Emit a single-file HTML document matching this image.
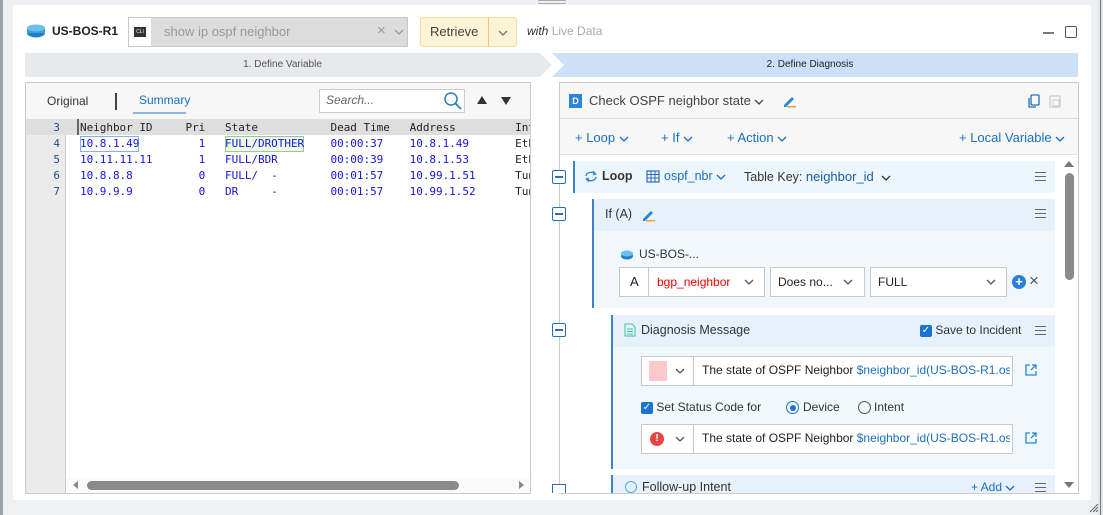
<!DOCTYPE html>
<html><head><meta charset="utf-8"><style>
*{box-sizing:border-box;margin:0;padding:0}
body{width:1103px;height:515px;background:#eef0f4;font-family:"Liberation Sans",sans-serif;font-size:12px;color:#222;position:relative;overflow:hidden}
.a{position:absolute}
.mono{font-family:"DejaVu Sans Mono","Liberation Mono",monospace;font-size:11px}
.blue{color:#1a6fc0}
.ck{display:inline-block;width:12px;height:12px;background:#1a73d1;border-radius:2px;color:#fff;font-size:10px;line-height:12px;text-align:center;vertical-align:middle}
.mn{position:absolute;width:14px;height:14px;border:1.5px solid #2a6fb5;background:#fff;border-radius:2px}
.mn:after{content:"";position:absolute;left:2px;right:2px;top:5px;height:1.5px;background:#2a6fb5}
.hb{position:absolute;width:11px;height:9px;border-top:1.5px solid #666;border-bottom:1.5px solid #666}
.hb:after{content:"";position:absolute;left:0;right:0;top:2.5px;height:1.5px;background:#666}
.box{position:absolute;background:#fff;border:1px solid #ccc}
.cv{display:inline-block;width:10px;height:6px;vertical-align:middle}
</style></head><body>
<svg width="0" height="0" style="position:absolute"><defs><symbol id="c" viewBox="0 0 10 6"><path d="M1 1L5 5L9 1" fill="none" stroke="currentColor" stroke-width="1.3"/></symbol></defs></svg>
<div class="a" style="left:0;top:0;width:3px;height:515px;background:#9aa3ad"></div>
<div class="a" style="left:1098px;top:0;width:5px;height:515px;background:#e4e6ea"></div>
<div class="a" style="left:1100px;top:0;width:1px;height:515px;background:#777"></div>
<div class="a" style="left:538px;top:0;width:28px;height:4px;border-top:1px solid #aaa;border-bottom:1px solid #aaa"></div>
<div class="a" style="left:13px;top:5px;width:1078px;height:495px;background:#fff"></div>

<!-- header -->
<svg class="a" style="left:26px;top:24px" width="20" height="14"><ellipse cx="10" cy="9" rx="9" ry="4.5" fill="#1f7fc4"/><rect x="1" y="4" width="18" height="5" fill="#3aa0e0"/><ellipse cx="10" cy="4" rx="9" ry="3.5" fill="#6cc0f0"/></svg>
<div class="a" style="left:52px;top:24px;font-size:12px;font-weight:bold;color:#222">US-BOS-R1</div>
<div class="a" style="left:128px;top:17px;width:280px;height:30px;background:#dcdcdc;border:1px solid #c8c8c8"></div>
<div class="a" style="left:129px;top:18px;width:22px;height:28px;background:#fff"></div>
<div class="a" style="left:134px;top:27px;width:12px;height:10px;background:#333;color:#fff;font-size:5px;line-height:10px;text-align:center">CLI</div>
<div class="a" style="left:164px;top:24px;font-size:13px;color:#999">show ip ospf neighbor</div>
<div class="a" style="left:377px;top:22px;font-size:15px;color:#999">×</div>
<svg class="a cv" style="left:394px;top:29px;color:#999"><use href="#c"/></svg>
<div class="a" style="left:420px;top:17px;width:97px;height:30px;background:#fdf3d6;border:1px solid #f3dfa6;border-radius:3px"></div>
<div class="a" style="left:488px;top:17px;width:1px;height:30px;background:#f0c870"></div>
<div class="a" style="left:430px;top:24px;font-size:13px;color:#444">Retrieve</div>
<svg class="a cv" style="left:498px;top:30px;color:#777"><use href="#c"/></svg>
<div class="a" style="left:527px;top:24px;font-size:12px;"><i style="color:#333">with</i> <span style="color:#aaa">Live Data</span></div>
<div class="a" style="left:1043px;top:32px;width:11px;height:1.5px;background:#777"></div>
<div class="a" style="left:1065px;top:26px;width:12px;height:12px;border:1.5px solid #555;border-radius:2px"></div>

<!-- steps -->
<svg class="a" style="left:25px;top:53px" width="1054" height="24"><polygon points="0,0 515,0 527,12 515,24 0,24" fill="#e8e9eb"/><polygon points="527,0 1053,0 1053,24 527,24 539,12" fill="#cce1f7"/><polygon points="515,0 527,12 515,24 520,24 532,12 520,0" fill="#fff"/></svg>
<div class="a" style="left:25px;top:59px;width:515px;text-align:center;font-size:10px;color:#555">1. Define Variable</div>
<div class="a" style="left:545px;top:59px;width:530px;text-align:center;font-size:10px;color:#222">2. Define Diagnosis</div>

<!-- left panel -->
<div class="box" style="left:25px;top:82px;width:506px;height:412px"></div>
<div class="a" style="left:26px;top:83px;width:504px;height:36px;background:#f7f7f7"></div>
<div class="a" style="left:47px;top:94px;font-size:12px;color:#333">Original</div>
<div class="a" style="left:115px;top:93px;width:1.5px;height:17px;background:#444"></div>
<div class="a" style="left:139px;top:93px;font-size:12px;color:#1a6fc0">Summary</div>
<div class="a" style="left:133px;top:112px;width:53px;height:2px;background:#8ab8e0"></div>
<div class="a" style="left:319px;top:89px;width:146px;height:24px;background:#fff;border:1px solid #ccc"></div>
<div class="a" style="left:326px;top:93px;font-size:12px;font-style:italic;color:#666">Search...</div>
<svg class="a" style="left:443px;top:91px" width="20" height="20"><circle cx="8" cy="8" r="6" fill="none" stroke="#2a7fc0" stroke-width="1.5"/><line x1="12.5" y1="12.5" x2="18" y2="18" stroke="#2a7fc0" stroke-width="1.8"/></svg>
<div class="a" style="left:477px;top:96px;width:0;height:0;border-left:5px solid transparent;border-right:5px solid transparent;border-bottom:8px solid #333"></div>
<div class="a" style="left:501px;top:97px;width:0;height:0;border-left:5px solid transparent;border-right:5px solid transparent;border-top:8px solid #333"></div>
<div class="a" style="left:26px;top:119px;width:40px;height:374px;background:#ebebeb;border-right:1px solid #ccc"></div>
<div class="a" style="left:26px;top:119px;width:504px;height:16px;background:#dedede"></div>
<div class="a" style="left:77px;top:119px;width:2px;height:16px;background:#666"></div>
<div class="a mono" style="left:26px;top:120px;width:34px;text-align:right;line-height:16px;color:#1a4f8a">3<br>4<br>5<br>6<br>7</div>
<div class="a" style="left:80px;top:136px;width:59px;height:16px;border:1px solid #7fb6e6"></div>
<div class="a" style="left:225px;top:136px;width:79px;height:16px;border:1px solid #8fd08f;background:#eef9e8"></div>
<pre class="a mono" style="left:80px;top:120px;line-height:16px;color:#1515e0;width:450px;overflow:hidden;letter-spacing:-0.03px"><span style="color:#222">Neighbor ID     Pri   State           Dead Time   Address         Int</span>
10.8.1.49         1   FULL/DROTHER    00:00:37    10.8.1.49       <span style="color:#222">Eth</span>
10.11.11.11       1   FULL/BDR        00:00:39    10.8.1.53       <span style="color:#222">Eth</span>
10.8.8.8          0   FULL/  -        00:01:57    10.99.1.51      <span style="color:#222">Tun</span>
10.9.9.9          0   DR     -        00:01:57    10.99.1.52      <span style="color:#222">Tun</span></pre>
<div class="a" style="left:67px;top:478px;width:462px;height:15px;background:#fafafa"></div>
<div class="a" style="left:73px;top:481px;width:0;height:0;border-top:4px solid transparent;border-bottom:4px solid transparent;border-right:5px solid #888"></div>
<div class="a" style="left:87px;top:481px;width:372px;height:9px;background:#8a8a8a;border-radius:5px"></div>
<div class="a" style="left:519px;top:481px;width:0;height:0;border-top:4px solid transparent;border-bottom:4px solid transparent;border-left:5px solid #888"></div>

<!-- right panel -->
<div class="box" style="left:559px;top:82px;width:520px;height:412px"></div>
<div class="a" style="left:560px;top:83px;width:518px;height:36px;background:#f7f7f7;border-bottom:1px solid #ddd"></div>
<div class="a" style="left:569px;top:94px;width:13px;height:14px;background:#2a86d6;color:#fff;font-size:9px;font-weight:bold;text-align:center;line-height:14px">D</div>
<div class="a" style="left:589px;top:93px;font-size:13px;color:#444">Check OSPF neighbor state <svg class="cv" style="color:#444"><use href="#c"/></svg></div>
<svg class="a" style="left:781px;top:93px" width="16" height="16"><path d="M3 12 L11 4 L13 6 L5 14 L3 14 Z" fill="#2a86d6"/><rect x="6" y="13" width="9" height="1.5" fill="#f0a030"/></svg>
<svg class="a" style="left:1027px;top:94px" width="14" height="14"><rect x="4" y="1" width="8" height="10" rx="1" fill="none" stroke="#2a6fb5" stroke-width="1.3"/><path d="M2 4 V13 H9" fill="none" stroke="#2a6fb5" stroke-width="1.3"/></svg>
<svg class="a" style="left:1048px;top:94px" width="14" height="14"><rect x="2" y="2" width="10" height="11" rx="1" fill="none" stroke="#ccc" stroke-width="1.3"/><rect x="5" y="6" width="6" height="6" fill="none" stroke="#ccc"/></svg>
<div class="a" style="left:560px;top:119px;width:518px;height:36px;background:#f7f7f7;border-bottom:1px solid #e4e4e4"></div>
<div class="a blue" style="left:575px;top:130px;font-size:13px">+ Loop <svg class="cv"><use href="#c"/></svg></div>
<div class="a blue" style="left:661px;top:130px;font-size:13px">+ If <svg class="cv"><use href="#c"/></svg></div>
<div class="a blue" style="left:727px;top:130px;font-size:13px">+ Action <svg class="cv"><use href="#c"/></svg></div>
<div class="a blue" style="left:959px;top:130px;font-size:13px">+ Local Variable <svg class="cv"><use href="#c"/></svg></div>

<div class="a" style="left:559px;top:185px;width:1px;height:308px;background:#ccc"></div>
<!-- loop -->
<div class="a" style="left:573px;top:161px;width:482px;height:32px;background:#eef6fd;border-left:2px solid #3b82d0"></div>
<div class="mn" style="left:552px;top:170px"></div>
<svg class="a" style="left:584px;top:170px" width="14" height="13"><path d="M2 6 A5 4 0 0 1 11 4 M12 7 A5 4 0 0 1 3 9" fill="none" stroke="#2a86d6" stroke-width="1.3"/><path d="M9 1 L12 4 L9 5" fill="none" stroke="#2a86d6"/><path d="M5 12 L2 9 L5 8" fill="none" stroke="#2a86d6"/></svg>
<div class="a" style="left:602px;top:169px;font-size:12.5px;font-weight:bold;color:#333">Loop</div>
<svg class="a" style="left:646px;top:170px" width="14" height="13"><rect x="1" y="1" width="12" height="11" fill="none" stroke="#2a6fb5" stroke-width="1.2"/><path d="M1 4.5H13M1 8H13M5 1V12M9 1V12" stroke="#2a6fb5"/></svg>
<div class="a blue" style="left:664px;top:169px;font-size:12.5px">ospf_nbr <svg class="cv"><use href="#c"/></svg></div>
<div class="a" style="left:744px;top:169px;font-size:12.5px;color:#333">Table Key: <span style="color:#1a5e9e;font-size:13px">neighbor_id</span> &nbsp;<svg class="cv" style="color:#333"><use href="#c"/></svg></div>
<div class="hb" style="left:1035px;top:172px"></div>
<!-- if -->
<div class="a" style="left:592px;top:199px;width:463px;height:109px;background:#f0f7fd;border-left:2px solid #3b82d0"></div>
<div class="a" style="left:594px;top:199px;width:461px;height:32px;background:#e6f1fb"></div>
<div class="mn" style="left:552px;top:207px"></div>
<div class="a" style="left:605px;top:207px;font-size:12.5px;color:#333">If (A)</div>
<svg class="a" style="left:640px;top:207px" width="16" height="16"><path d="M3 12 L11 4 L13 6 L5 14 L3 14 Z" fill="#2a86d6"/><rect x="6" y="13" width="9" height="1.5" fill="#f0a030"/></svg>
<div class="hb" style="left:1035px;top:209px"></div>
<svg class="a" style="left:620px;top:250px" width="14" height="10"><ellipse cx="7" cy="6" rx="6" ry="3.5" fill="#1f7fc4"/><ellipse cx="7" cy="3.5" rx="6" ry="3" fill="#6cc0f0"/></svg>
<div class="a" style="left:639px;top:247px;font-size:12px;color:#333">US-BOS-...</div>
<div class="box" style="left:619px;top:267px;width:146px;height:30px;border-color:#c8c8c8"></div>
<div class="a" style="left:648px;top:267px;width:1px;height:30px;background:#c8c8c8"></div>
<div class="a" style="left:630px;top:274px;font-size:13px">A</div>
<div class="a" style="left:657px;top:275px;font-size:12px;color:#e00">bgp_neighbor</div>
<svg class="a cv" style="left:744px;top:279px;color:#555"><use href="#c"/></svg>
<div class="box" style="left:770px;top:267px;width:95px;height:30px;border-color:#c8c8c8"></div>
<div class="a" style="left:778px;top:275px;font-size:12px">Does no...</div>
<svg class="a cv" style="left:843px;top:279px;color:#555"><use href="#c"/></svg>
<div class="box" style="left:870px;top:267px;width:137px;height:30px;border-color:#c8c8c8"></div>
<div class="a" style="left:878px;top:275px;font-size:12px">FULL</div>
<svg class="a cv" style="left:986px;top:279px;color:#555"><use href="#c"/></svg>
<div class="a" style="left:1012px;top:275px;width:14px;height:14px;border-radius:50%;background:#2a7fd6;color:#fff;font-size:13px;line-height:13px;text-align:center;font-weight:bold">+</div>
<div class="a" style="left:1029px;top:271px;font-size:17px;color:#555">×</div>
<!-- diagnosis -->
<div class="a" style="left:611px;top:315px;width:444px;height:154px;background:#f0f7fd;border-left:2px solid #3b82d0"></div>
<div class="a" style="left:613px;top:315px;width:442px;height:32px;background:#e6f1fb"></div>
<div class="mn" style="left:552px;top:323px"></div>
<svg class="a" style="left:624px;top:323px" width="12" height="14"><path d="M1 1H8L11 4V13H1Z" fill="#e4f7f3" stroke="#3cc0a8"/><path d="M3 6H9M3 8.5H9M3 11H9" stroke="#3cc0a8"/></svg>
<div class="a" style="left:641px;top:323px;font-size:12.5px;color:#333">Diagnosis Message</div>
<div class="a" style="left:920px;top:323px;font-size:12px;color:#333"><span class="ck">✓</span> Save to Incident</div>
<div class="hb" style="left:1035px;top:326px"></div>
<div class="box" style="left:641px;top:356px;width:372px;height:30px;border-color:#c8c8c8"></div>
<div class="a" style="left:693px;top:356px;width:1px;height:30px;background:#c8c8c8"></div>
<div class="a" style="left:649px;top:361px;width:18px;height:20px;background:#fdc8cc"></div>
<svg class="a cv" style="left:675px;top:368px;color:#555"><use href="#c"/></svg>
<div class="a" style="left:702px;top:363px;font-size:12px;white-space:nowrap;width:308px;overflow:hidden">The state of OSPF Neighbor <span class="blue">$neighbor_id(US-BOS-R1.os</span></div>
<svg class="a" style="left:1024px;top:363px" width="14" height="14"><path d="M6 2H2V12H12V8" fill="none" stroke="#2a86d6" stroke-width="1.3"/><path d="M7 7L12 2M8 2H12V6" fill="none" stroke="#2a86d6" stroke-width="1.3"/></svg>
<div class="a" style="left:641px;top:400px;font-size:12px;color:#333"><span class="ck">✓</span> Set Status Code for</div>
<div class="a" style="left:786px;top:401px;width:13px;height:13px;border-radius:50%;border:1.5px solid #1a73d1"></div>
<div class="a" style="left:789.5px;top:404.5px;width:6px;height:6px;border-radius:50%;background:#1a73d1"></div>
<div class="a" style="left:803px;top:400px;font-size:12px;color:#333">Device</div>
<div class="a" style="left:858px;top:401px;width:13px;height:13px;border-radius:50%;border:1px solid #555"></div>
<div class="a" style="left:874px;top:400px;font-size:12px;color:#333">Intent</div>
<div class="box" style="left:641px;top:424px;width:372px;height:30px;border-color:#c8c8c8"></div>
<div class="a" style="left:693px;top:424px;width:1px;height:30px;background:#c8c8c8"></div>
<div class="a" style="left:650px;top:432px;width:14px;height:14px;border-radius:50%;background:#e84545;color:#fff;font-size:10px;font-weight:bold;text-align:center;line-height:14px">!</div>
<svg class="a cv" style="left:675px;top:436px;color:#555"><use href="#c"/></svg>
<div class="a" style="left:702px;top:431px;font-size:12px;white-space:nowrap;width:308px;overflow:hidden">The state of OSPF Neighbor <span class="blue">$neighbor_id(US-BOS-R1.os</span></div>
<svg class="a" style="left:1024px;top:431px" width="14" height="14"><path d="M6 2H2V12H12V8" fill="none" stroke="#2a86d6" stroke-width="1.3"/><path d="M7 7L12 2M8 2H12V6" fill="none" stroke="#2a86d6" stroke-width="1.3"/></svg>
<!-- follow-up (clipped) -->
<div class="a" style="left:611px;top:475px;width:444px;height:18px;background:#e6f1fb;border-left:2px solid #3b82d0;overflow:hidden">
<div style="position:absolute;left:12px;top:6px;width:12px;height:12px;border-radius:50%;border:1.5px solid #5aaae0"></div>
<div style="position:absolute;left:29px;top:5px;font-size:12.5px;color:#333">Follow-up Intent</div>
<div style="position:absolute;left:358px;top:5px;font-size:12px;color:#1a6fc0">+ Add <svg class="cv"><use href="#c"/></svg></div>
<div class="hb" style="left:422px;top:8px"></div></div>
<div class="a" style="left:552px;top:484px;width:14px;height:9px;border:1.5px solid #2a6fb5;border-bottom:none;background:#fff"></div>
<!-- scrollbar -->
<div class="a" style="left:1064px;top:161px;width:0;height:0;border-left:5px solid transparent;border-right:5px solid transparent;border-bottom:6px solid #777"></div>
<div class="a" style="left:1065px;top:173px;width:9px;height:107px;background:#8a8a8a;border-radius:5px"></div>
<div class="a" style="left:1064px;top:482px;width:0;height:0;border-left:5px solid transparent;border-right:5px solid transparent;border-top:6px solid #777"></div>
<svg class="a" style="left:1089px;top:503px" width="10" height="10"><path d="M9 1L1 9M9 4L4 9M9 7L7 9" stroke="#666"/></svg>
</body></html>
